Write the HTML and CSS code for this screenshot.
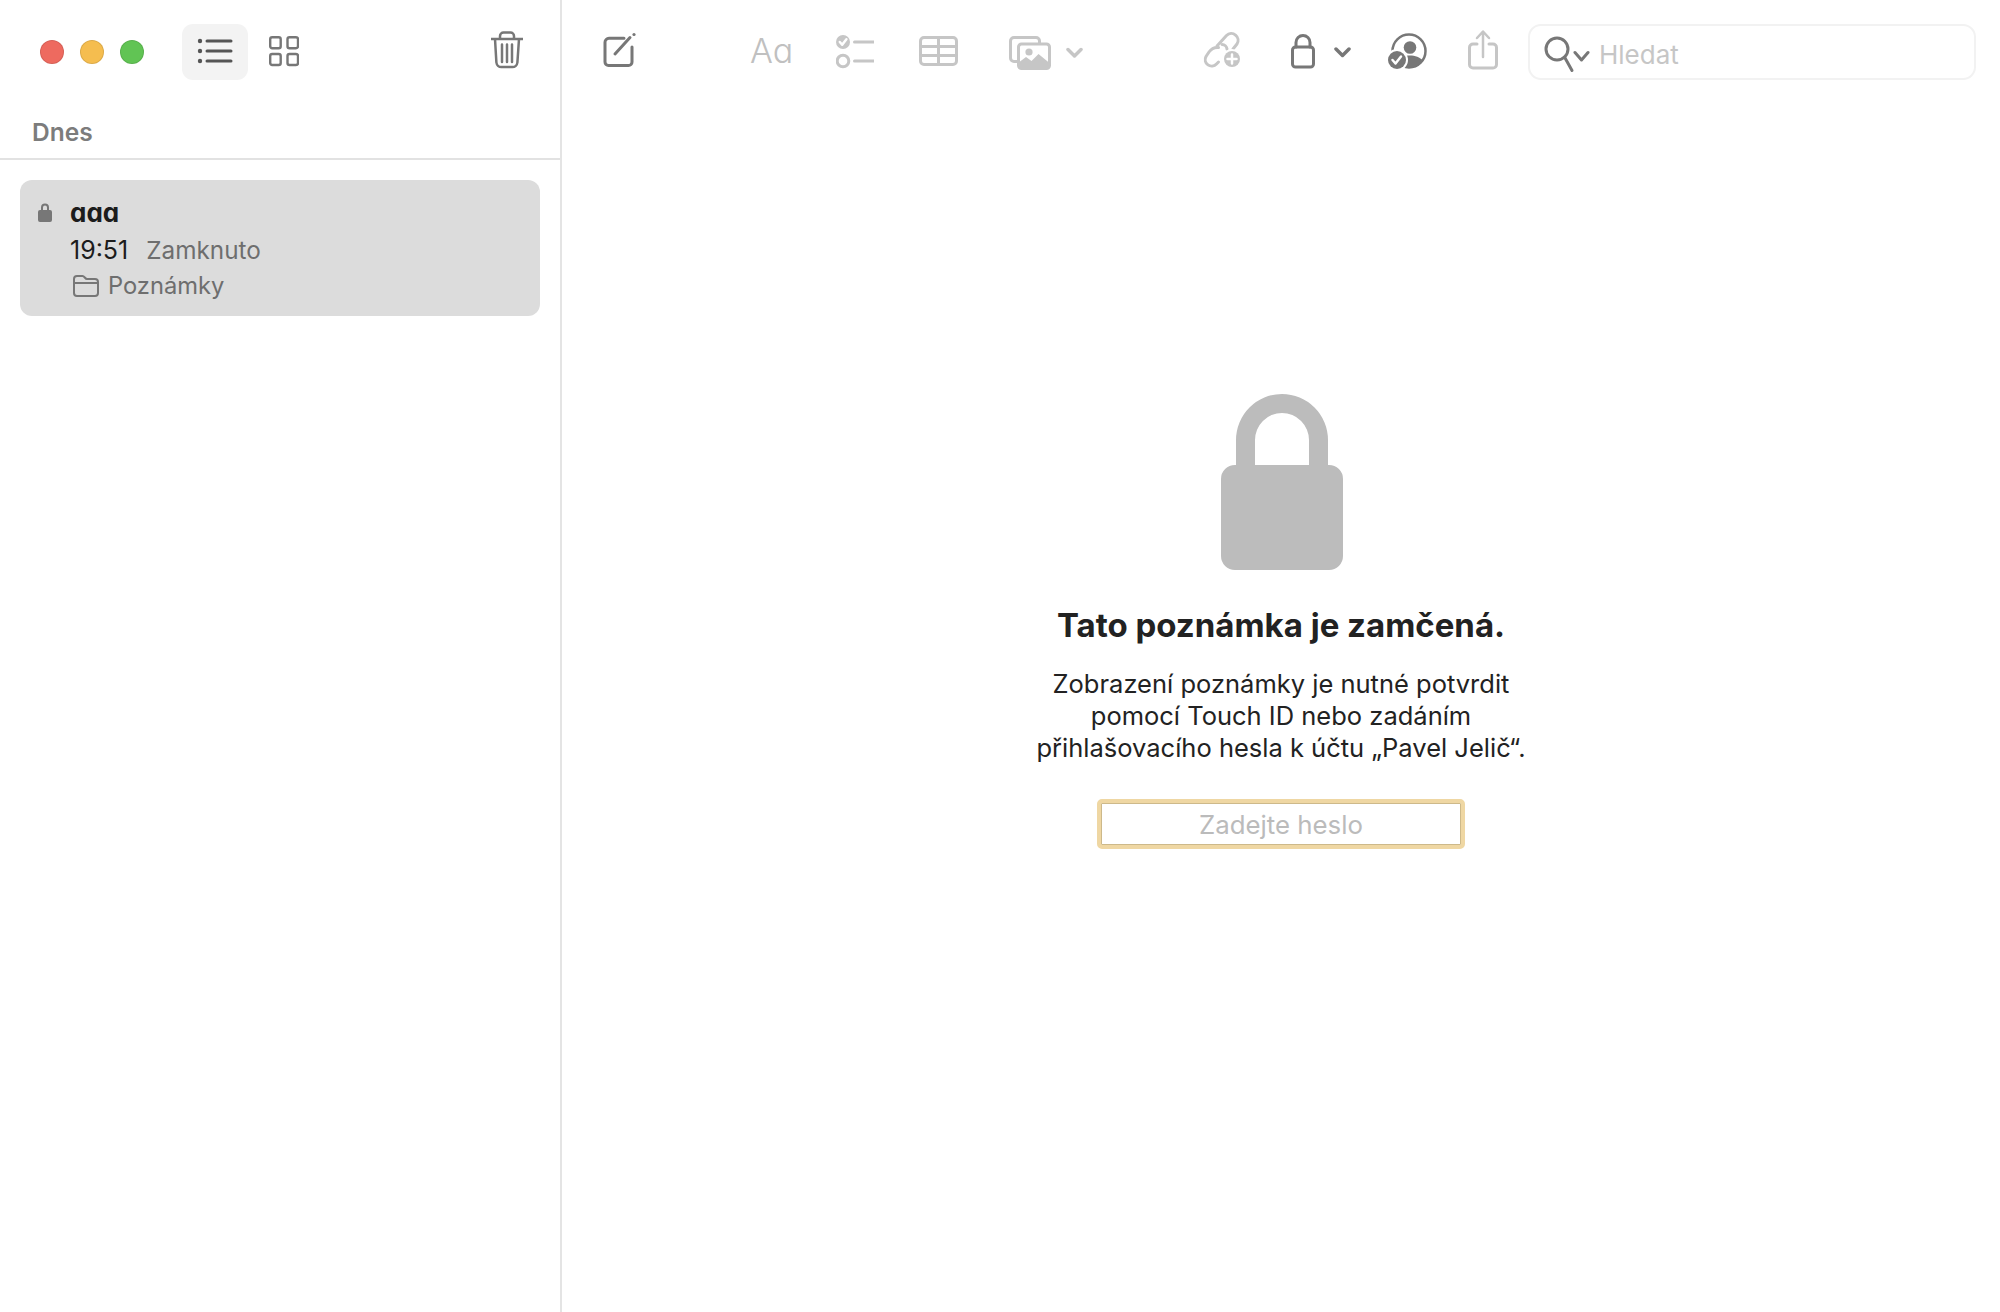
FILE: index.html
```html
<!DOCTYPE html>
<html lang="cs">
<head>
<meta charset="utf-8">
<title>Poznámky</title>
<link rel="stylesheet" href="styles.css">
</head>
<body>
<div class="app">
  <aside class="sidebar">
    <div class="side-toolbar">
      <div class="lights">
        <span class="light red"></span>
        <span class="light yellow"></span>
        <span class="light green"></span>
      </div>
      <button class="view-btn">
        <svg width="66" height="56" viewBox="0 0 66 56" class="dark-stroke"><circle cx="18" cy="17" r="2.2" class="dot"/><circle cx="18" cy="27" r="2.2" class="dot"/><circle cx="18" cy="37" r="2.2" class="dot"/><path d="M25 17H49M25 27H49M25 37H49"/></svg>
      </button>
      <svg class="ic-grid mid-stroke" width="30" height="48" viewBox="0 0 30 48"><rect x="1.2" y="13.2" width="10.5" height="11" rx="2"/><rect x="18.5" y="13.2" width="10.5" height="11" rx="2"/><rect x="1.2" y="30" width="10.5" height="11" rx="2"/><rect x="18.5" y="30" width="10.5" height="11" rx="2"/></svg>
      <svg class="ic-trash mid-stroke" width="32" height="48" viewBox="0 0 32 48"><path d="M0.5 15H31.5M9 15V12a3.5 3.5 0 0 1 3.5-3.5h7a3.5 3.5 0 0 1 3.5 3.5V15M4 15l1.4 23.5a5 5 0 0 0 5 4.5h11a5 5 0 0 0 5-4.5L28 15M11 20.5V38M16 20.5V38M21 20.5V38" class="thin"/></svg>
    </div>
    <div class="section-head">Dnes</div>
    <div class="note-row">
      <svg class="ic-smalllock" width="14" height="20" viewBox="0 0 14 20"><path class="fill-mid" d="M3 8V5.5a4 4 0 0 1 8 0V8h1a2 2 0 0 1 2 2v8a2 2 0 0 1-2 2H2a2 2 0 0 1-2-2v-8a2 2 0 0 1 2-2zM5 8h4V5.5a2 2 0 0 0-4 0z"/></svg>
      <div class="note-body">
        <div class="note-title">aaa</div>
        <div class="note-meta"><span class="note-time">19:51</span><span class="note-status">Zamknuto</span></div>
        <div class="note-folder">
          <svg class="ic-folder" width="26" height="22" viewBox="0 0 26 22"><path d="M1 18V4a3 3 0 0 1 3-3h5.5c2 0 2.5 3 4.5 3h8a3 3 0 0 1 3 3v11a3 3 0 0 1-3 3H4a3 3 0 0 1-3-3zM1 8H25"/></svg>
          <span>Poznámky</span>
        </div>
      </div>
    </div>
  </aside>
  <main class="content">
    <div class="main-toolbar">
      <svg class="t-compose mid-stroke" width="34" height="48" viewBox="0 0 34 48"><path d="M21 14.3H6a4 4 0 0 0-4 4V38a3.5 3.5 0 0 0 3.5 3.5H25.5a3.5 3.5 0 0 0 3.5-3.5V23"/><path d="M12 30L27 13.5"/><circle cx="31" cy="10.5" r="1.6" class="fill-mid nostroke"/></svg>
      <span class="t-aa">Aa</span>
      <svg class="t-check light-stroke" width="38" height="48" viewBox="0 0 38 48"><circle cx="7" cy="18" r="7" class="fill-light nostroke"/><path class="white-line" d="M3.8 18l2.4 2.8 4.2-5.6"/><circle cx="7" cy="37" r="5.8"/><path d="M18.5 18H37.5M18.5 37H37.5"/></svg>
      <svg class="t-table light-stroke" width="39" height="48" viewBox="0 0 39 48"><rect x="1.5" y="13.5" width="36" height="27" rx="3.5"/><path d="M1.5 22.5H37.5M1.5 31.5H37.5M19.5 13.5V40.5"/></svg>
      <svg class="t-media light-stroke" width="42" height="48" viewBox="0 0 42 48"><rect x="1.5" y="13.5" width="29" height="24" rx="3.5"/><rect x="9.5" y="20" width="31" height="24.5" rx="3" class="fill-white"/><circle cx="20" cy="28" r="3.6" class="fill-light nostroke"/><path class="fill-light nostroke" d="M9 39l8-6 5.5 4 7-7 11 9v3a3 3 0 0 1-3 3H12a3 3 0 0 1-3-3z"/></svg>
      <svg class="t-chev1 light-stroke" width="17" height="48" viewBox="0 0 17 48"><path class="thick" d="M2 25.5L8.5 32L15 25.5"/></svg>
      <svg class="t-link light-stroke" width="40" height="48" viewBox="0 0 40 48"><path d="M15 22L24.5 11.5a6.8 6.8 0 0 1 10.5 8.5L31 25"/><path d="M20 20.500a5 5 0 0 1 5 4.500"/><path d="M16.5 23.5c-4-.5-7 1-9.5 4.500l-3 4.500a6.5 6.5 0 0 0 10.5 7.500l2-2"/><circle cx="30" cy="35" r="10" class="fill-white nostroke"/><circle cx="30" cy="35" r="8" class="fill-light nostroke"/><path class="white-line" d="M30 30.500V39.500M25.500 35H34.500"/></svg>
      <svg class="t-lock mid-stroke" width="24" height="48" viewBox="0 0 24 48"><path d="M5 23V18.5a7 7 0 0 1 14 0V23"/><rect x="1.5" y="23" width="21" height="20" rx="3"/></svg>
      <svg class="t-chev2 mid-stroke" width="17" height="48" viewBox="0 0 17 48"><path class="thick" d="M2 25L8.5 31.5L15 25"/></svg>
      <svg class="t-person mid-stroke" width="40" height="48" viewBox="0 0 40 48"><circle cx="22" cy="27" r="16.5" class="thin"/><circle cx="23" cy="23.5" r="6.3" class="fill-mid nostroke"/><path class="fill-mid nostroke" d="M10 38c2-5 8-6.5 13-6.5s10 1.5 13 5.500c-3 4-8 6.500-13 6.500s-10-2-13-5.500z"/><circle cx="10" cy="36" r="11" class="fill-white nostroke"/><circle cx="10" cy="36" r="9" class="fill-mid nostroke"/><path class="white-line" d="M5.5 36l3 3.5 5.5-7"/></svg>
      <svg class="t-share light-stroke" width="30" height="48" viewBox="0 0 30 48"><path d="M9 20H5a3.5 3.5 0 0 0-3.500 3.500V40.500A3.500 3.500 0 0 0 5 44H25a3.500 3.500 0 0 0 3.500-3.500V23.500A3.500 3.500 0 0 0 25 20H21"/><path d="M15 33V8.500M9 14l6-6.500 6 6.500" class="thin"/></svg>
      <div class="search">
        <svg class="s-mag" width="46" height="48" viewBox="0 0 46 48"><circle cx="13" cy="21" r="11" class="mag"/><path class="mag" d="M20.500 29L28 42.500"/><path class="mag" d="M31 24.500L37.500 32L44 24.500"/></svg>
        <span class="s-text">Hledat</span>
      </div>
    </div>
    <section class="locked">
      <svg class="big-lock" width="122" height="176" viewBox="0 0 122 176"><path d="M15 71V46a46 46 0 0 1 92 0V71h1a14 14 0 0 1 14 14v77a14 14 0 0 1-14 14H14a14 14 0 0 1-14-14V85a14 14 0 0 1 14-14zM34 71h54V46a27 27 0 0 0-54 0z"/></svg>
      <h1 class="locked-title">Tato poznámka je zamčená.</h1>
      <p class="locked-text">Zobrazení poznámky je nutné potvrdit<br>pomocí Touch ID nebo zadáním<br>přihlašovacího hesla k účtu „Pavel Jelič“.</p>
      <div class="pw-field">Zadejte heslo</div>
    </section>
  </main>
</div>
</body>
</html>
```
FILE: styles.css
```css
* { box-sizing: border-box; }
html, body { margin: 0; height: 100%; background: #fff; }
body { font-family: Inter, "Noto Sans", sans-serif; color: #222; }
.app { display: flex; width: 2000px; height: 1312px; overflow: hidden; }

svg { display: block; flex: none; fill: none; stroke-linecap: round; stroke-linejoin: round; }
.dark-stroke { stroke: #555; stroke-width: 3; }
.mid-stroke { stroke: #777; stroke-width: 3; }
.light-stroke { stroke: #c6c6c6; stroke-width: 3; }
.thin { stroke-width: 2.5; }
.thick { stroke-width: 3.5; }
.nostroke { stroke: none; }
.dot { fill: #555; stroke: none; }
.fill-mid { fill: #777; stroke: none; }
.fill-light { fill: #c6c6c6; }
.fill-white { fill: #fff; }
.white-line { stroke: #fff; stroke-width: 2.5; }

.sidebar { width: 562px; flex: none; border-right: 2px solid #e4e4e4; }
.side-toolbar { display: flex; align-items: flex-start; height: 80px; padding: 24px 37px 0 40px; }
.lights { display: flex; gap: 16px; margin-top: 16px; }
.light { width: 24px; height: 24px; border-radius: 50%; border: 1px solid rgba(0, 0, 0, .1); }
.red { background: #ee6a5f; }
.yellow { background: #f5bd4f; }
.green { background: #61c454; }
.view-btn { width: 66px; height: 56px; margin-left: 38px; padding: 0; border: 0; border-radius: 11px; background: #f3f3f3; }
.ic-grid { margin-left: 21px; }
.ic-grid rect { stroke-width: 2.4; }
.ic-trash { margin-left: auto; }

.section-head { height: 80px; padding: 36px 0 0 32px; font-size: 24.5px; line-height: 32px; font-weight: 600; color: #7c7c7c; border-bottom: 2px solid #e2e2e2; }
.note-row { display: grid; grid-template-columns: 32px 1fr; height: 136px; margin: 20px 20px 0; padding: 22px 0 0 18px; background: #dcdcdc; border-radius: 12px; }
.note-body { min-width: 0; }
.note-title { margin-top: -2px; font-size: 26px; line-height: 26px; font-weight: 700; font-feature-settings: "cv11"; color: #1c1c1c; }
.note-meta { display: flex; gap: 18px; margin-top: 6px; font-size: 24.3px; line-height: 36px; }
.note-time { font-size: 25px; color: #1c1c1c; }
.note-status { color: #6e6e6e; }
.note-folder { display: flex; align-items: center; gap: 9px; margin-top: 0; padding-left: 3px; font-size: 23.7px; line-height: 36px; color: #6e6e6e; }
.ic-folder { stroke: #777; stroke-width: 2; }

.content { flex: 1; min-width: 0; }
.main-toolbar { display: flex; height: 80px; padding: 24px 0 0 41px; }
.t-aa { width: 42px; height: 48px; margin-left: 113px; font-size: 34px; line-height: 54px; font-weight: 300; font-feature-settings: "cv11"; color: #c0c0c0; }
.t-check { margin-left: 44px; }
.t-table { margin-left: 45px; }
.t-media { margin-left: 51px; }
.t-chev1 { margin-left: 15px; }
.t-link { margin-left: 119px; }
.t-lock { margin-left: 49px; }
.t-chev2 { margin-left: 19px; }
.t-person { margin-left: 36px; }
.t-share { margin-left: 41px; }
.search { display: flex; align-items: center; width: 448px; height: 56px; margin-left: 30px; padding-left: 16px; border: 2px solid #f2f2f2; border-radius: 13px; }
.s-mag { margin-left: -2px; }
.mag { stroke: #777; stroke-width: 3; }
.s-text { margin: 5px 0 0 9px; font-size: 26px; color: #c6c6c6; }

.locked { display: flex; flex-direction: column; align-items: center; padding-top: 314px; }
.big-lock { margin-left: 2px; fill: #bcbcbc; fill-rule: evenodd; }
.locked-title { margin: 33px 0 0; font-size: 33px; line-height: 44px; font-weight: 700; color: #222; }
.locked-text { margin: 21px 0 0; font-size: 25.5px; line-height: 32px; text-align: center; color: #222; }
.pw-field { width: 368px; height: 50px; margin-top: 35px; border: 4px solid #efd7a3; box-shadow: inset 0 0 0 1px #cdb98a; border-radius: 5px; font-size: 25.8px; line-height: 44px; text-align: center; color: #bbb; }
```
